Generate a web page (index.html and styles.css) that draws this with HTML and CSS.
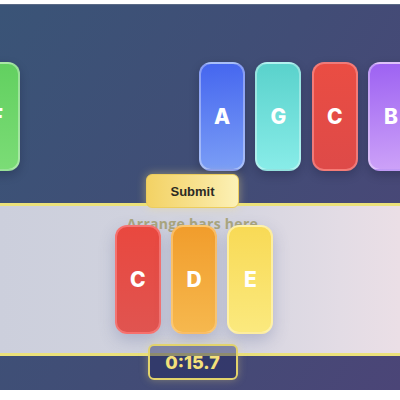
FILE: index.html
```html
<!DOCTYPE html>
<html>
<head>
<meta charset="utf-8">
<link rel="stylesheet" href="styles.css">
</head>
<body>
<div class="app">
  <div class="rack">
    <div class="bar green">F</div>
    <div class="bar slot"></div>
    <div class="bar slot"></div>
    <div class="bar slot"></div>
    <div class="bar blue">A</div>
    <div class="bar teal">G</div>
    <div class="bar red">C</div>
    <div class="bar purple">B</div>
  </div>
  <div class="center">
    <button class="submit">Submit</button>
  </div>
  <div class="dropzone">
    <div class="label">Arrange bars here</div>
    <div class="placed">
      <div class="bar red2">C</div>
      <div class="bar orange">D</div>
      <div class="bar yellow">E</div>
    </div>
  </div>
  <div class="center">
    <div class="timer">0:15.7</div>
  </div>
</div>
</body>
</html>
```
FILE: styles.css
```css
html, body {
  margin: 0;
  padding: 0;
  background: #ffffff;
}
body {
  width: 400px;
  height: 400px;
  overflow: hidden;
  font-family: "Inter", "Liberation Sans", sans-serif;
}
.app {
  margin-top: 4px;
  height: 386px;
  background: linear-gradient(120deg, #3a5477 0%, #414d76 50%, #4b4577 100%);
  display: flex;
  flex-direction: column;
  overflow: hidden;
  border-top: 1px solid #5a6a86;
  box-sizing: border-box;
}
.rack {
  display: flex;
  gap: 10.3px;
  margin-top: 57px;
  margin-left: -26px;
  height: 109px;
}
.bar {
  flex: none;
  width: 46px;
  height: 109px;
  box-sizing: border-box;
  border-radius: 12px;
  border: 2px solid rgba(255, 255, 255, 0.35);
  display: flex;
  align-items: center;
  justify-content: center;
  color: #ffffff;
  font-weight: 800;
  font-size: 21px;
  box-shadow: 0 4px 10px rgba(10, 15, 40, 0.25);
  position: relative;
  z-index: 2;
}
.slot {
  visibility: hidden;
}
.green { background: linear-gradient(180deg, #62d060, #7bdc76); }
.blue { background: linear-gradient(175deg, #4566ef, #7b9ef6); }
.teal { background: linear-gradient(180deg, #5ad2cc, #88ece8); }
.red { background: linear-gradient(180deg, #ea4d43, #de4a48); border-color: rgba(255, 170, 170, 0.5); }
.purple { background: linear-gradient(175deg, #9d62f2, #cda2f8); }
.red2 { background: linear-gradient(180deg, #e9483f, #e05450); border-color: rgba(255, 140, 140, 0.6); }
.orange { background: linear-gradient(180deg, #f19d2c, #f6b84e); border-color: rgba(255, 210, 140, 0.6); }
.yellow { background: linear-gradient(180deg, #f8da56, #fbe97e); border-color: rgba(255, 245, 190, 0.7); }

.center {
  display: flex;
  justify-content: center;
  padding-right: 15px;
  position: relative;
  z-index: 3;
}
.submit {
  margin-top: 3px;
  margin-bottom: -5px;
  width: 93px;
  height: 34px;
  border: 1px solid #eccd5e;
  border-radius: 6px;
  background: linear-gradient(90deg, #f3d264 0%, #f8e393 60%, #fcf1b6 100%);
  color: #2c2a24;
  font-family: "Liberation Sans", Arial, sans-serif;
  font-weight: 700;
  font-size: 13px;
  padding: 0;
  box-shadow: 0 0 10px rgba(250, 225, 120, 0.45);
}
.dropzone {
  position: relative;
  z-index: 1;
  border-top: 3px solid #ebe17a;
  border-bottom: 3px solid #ebe17a;
  background: linear-gradient(90deg, #cccfdc 0%, #d3d4df 55%, #e3dce5 85%, #ebdfe6 100%);
  padding: 10px 15px 19px 0;
  display: flex;
  flex-direction: column;
  align-items: center;
}
.label {
  font-family: "Open Sans", "Liberation Sans", sans-serif;
  font-weight: 700;
  font-size: 14px;
  line-height: 16px;
  color: #aaa67e;
  letter-spacing: 0.3px;
}
.placed {
  display: flex;
  gap: 10.3px;
  margin-top: -7px;
  margin-left: 3px;
}
.placed .bar {
  box-shadow: 0 6px 16px rgba(90, 100, 150, 0.3);
}
.timer {
  margin-top: -12px;
  width: 90px;
  height: 36px;
  box-sizing: border-box;
  border: 2px solid #e2d36c;
  border-radius: 6px;
  background: rgba(32, 38, 95, 0.45);
  color: #f4e07a;
  font-weight: 800;
  font-size: 18px;
  display: flex;
  align-items: center;
  justify-content: center;
  box-shadow: 0 0 8px rgba(240, 220, 120, 0.35);
}
```
